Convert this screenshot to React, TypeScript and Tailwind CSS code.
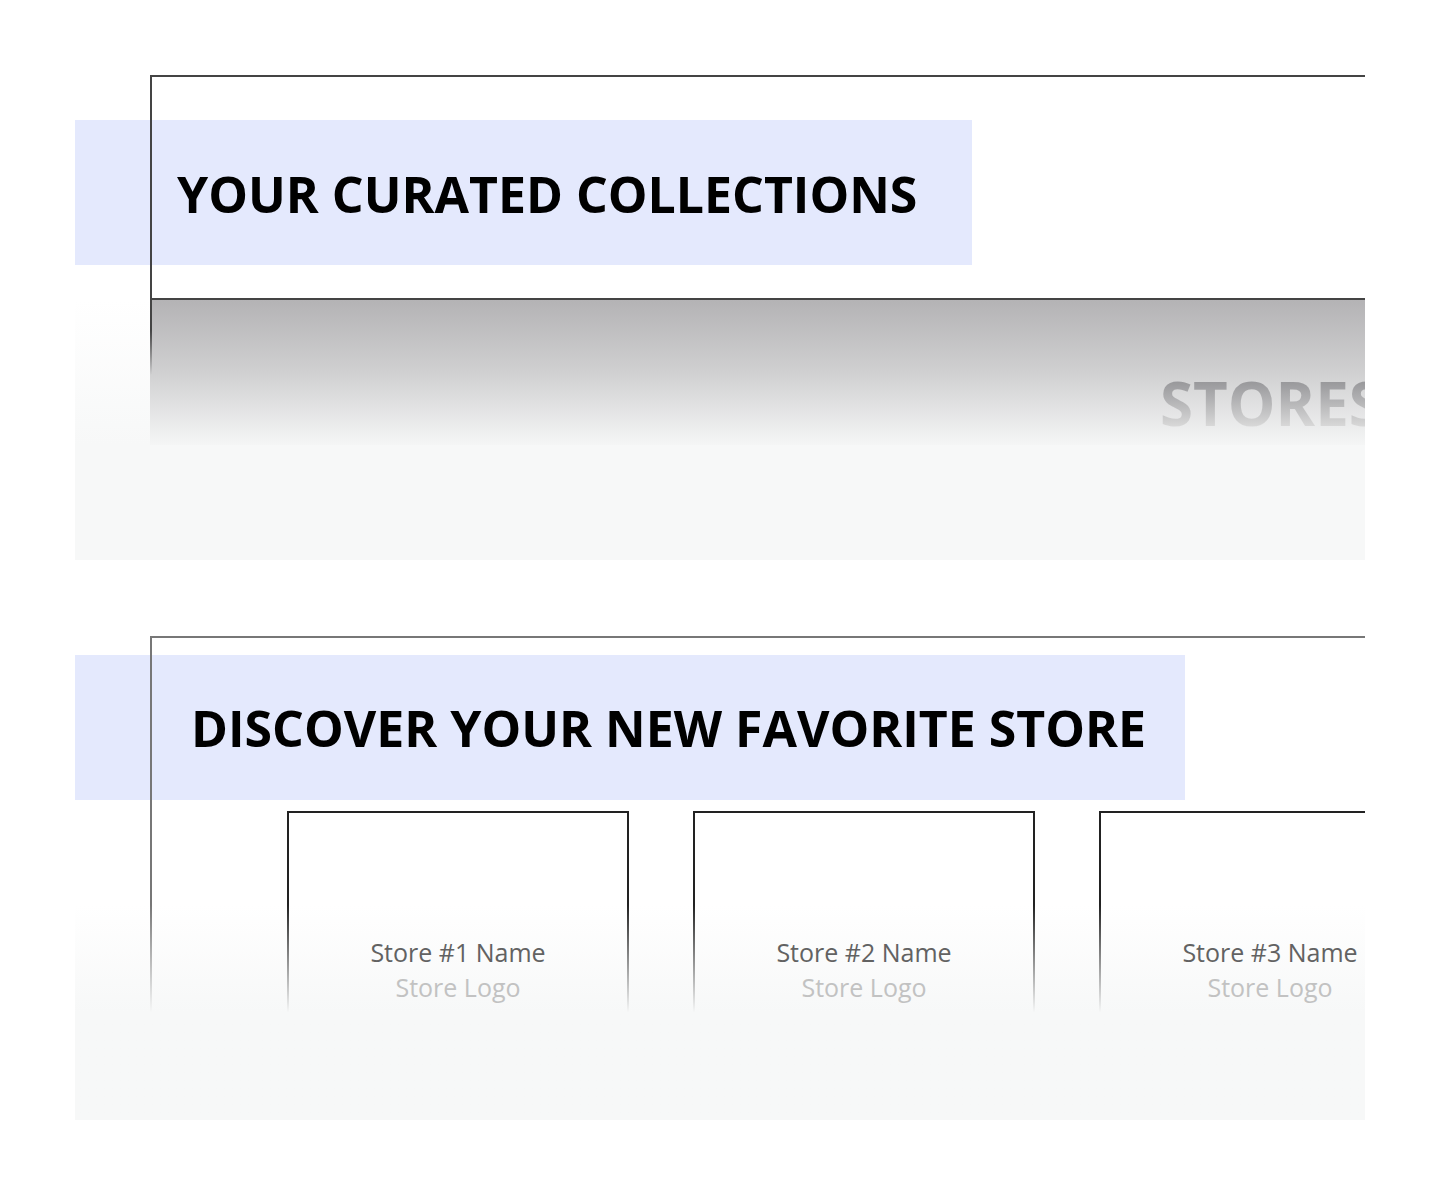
import React from 'react';

const stores = [
  { id: 1, name: 'Store #1 Name' },
  { id: 2, name: 'Store #2 Name' },
  { id: 3, name: 'Store #3 Name' },
];

function StoreCard({ name }: { name: string }) {
  return (
    <div className="h-[300px] w-[342px] shrink-0 border-2 border-[#222] bg-white">
      <div className="relative z-10 flex flex-col items-center pt-[122px] text-[25px] leading-[35px]">
        <span className="text-[#626262]">{name}</span>
        <span className="text-[#c2c2c2]">Store Logo</span>
      </div>
    </div>
  );
}

export default function App() {
  return (
    <div className="min-h-screen bg-white pb-[77px] pt-[75px] font-['Open_Sans','Noto_Sans',sans-serif]">
      {/* curated collections */}
      <section className="relative mx-[75px] h-[485px] overflow-hidden bg-white">
        <div className="pt-[45px]">
          <div className="flex h-[145px] w-[897px] items-center bg-[#e4e9fd] pl-[102px] pt-[3px]">
            <h2 className="text-[50px] font-bold leading-none text-black">YOUR CURATED COLLECTIONS</h2>
          </div>
        </div>
        <div className="ml-[75px] mt-[33px] h-[2px] bg-[#444]" />
        <div className="grid h-[145px] grid-cols-[75px_1fr]">
          <div className="bg-linear-to-b from-white to-[#f7f8f8]" />
          <div className="overflow-hidden bg-linear-to-b from-[#b4b3b5] via-[#d0d0d1] to-[#f5f6f6]">
            <span className="block whitespace-nowrap bg-linear-to-b from-[#929295] from-58% to-[#dadada] to-96% bg-clip-text pl-[1010px] pt-[73px] text-[60px] font-bold leading-none text-transparent">
              STORES
            </span>
          </div>
        </div>
        <div className="h-[115px] bg-[#f7f8f8]" />

        <div className="absolute left-[75px] right-0 top-0 h-[2px] bg-[#444]" />
        <div className="absolute left-[75px] top-0 h-[300px] w-[2px] bg-linear-to-b from-[#444] from-85% to-[#444]/0" />
      </section>

      {/* discover stores */}
      <section className="relative mx-[75px] mt-[76px] h-[484px] overflow-hidden bg-white">
        <div className="pt-[19px]">
          <div className="flex h-[145px] w-[1110px] items-center bg-[#e4e9fd] pl-[116px]">
            <h2 className="text-[50px] font-bold leading-none text-black">DISCOVER YOUR NEW FAVORITE STORE</h2>
          </div>
        </div>
        <div className="mt-[11px] flex gap-[64px] pl-[212px]">
          {stores.map((s) => (
            <StoreCard key={s.id} name={s.name} />
          ))}
        </div>

        <div className="absolute left-[75px] right-0 top-0 h-[2px] bg-[#777]" />
        <div className="absolute bottom-0 left-[75px] top-0 w-[2px] bg-[#777]" />
        <div className="absolute inset-x-0 bottom-0 top-[269px] bg-linear-to-b from-[#f7f8f8]/0 to-[#f7f8f8] to-50%" />
      </section>
    </div>
  );
}
